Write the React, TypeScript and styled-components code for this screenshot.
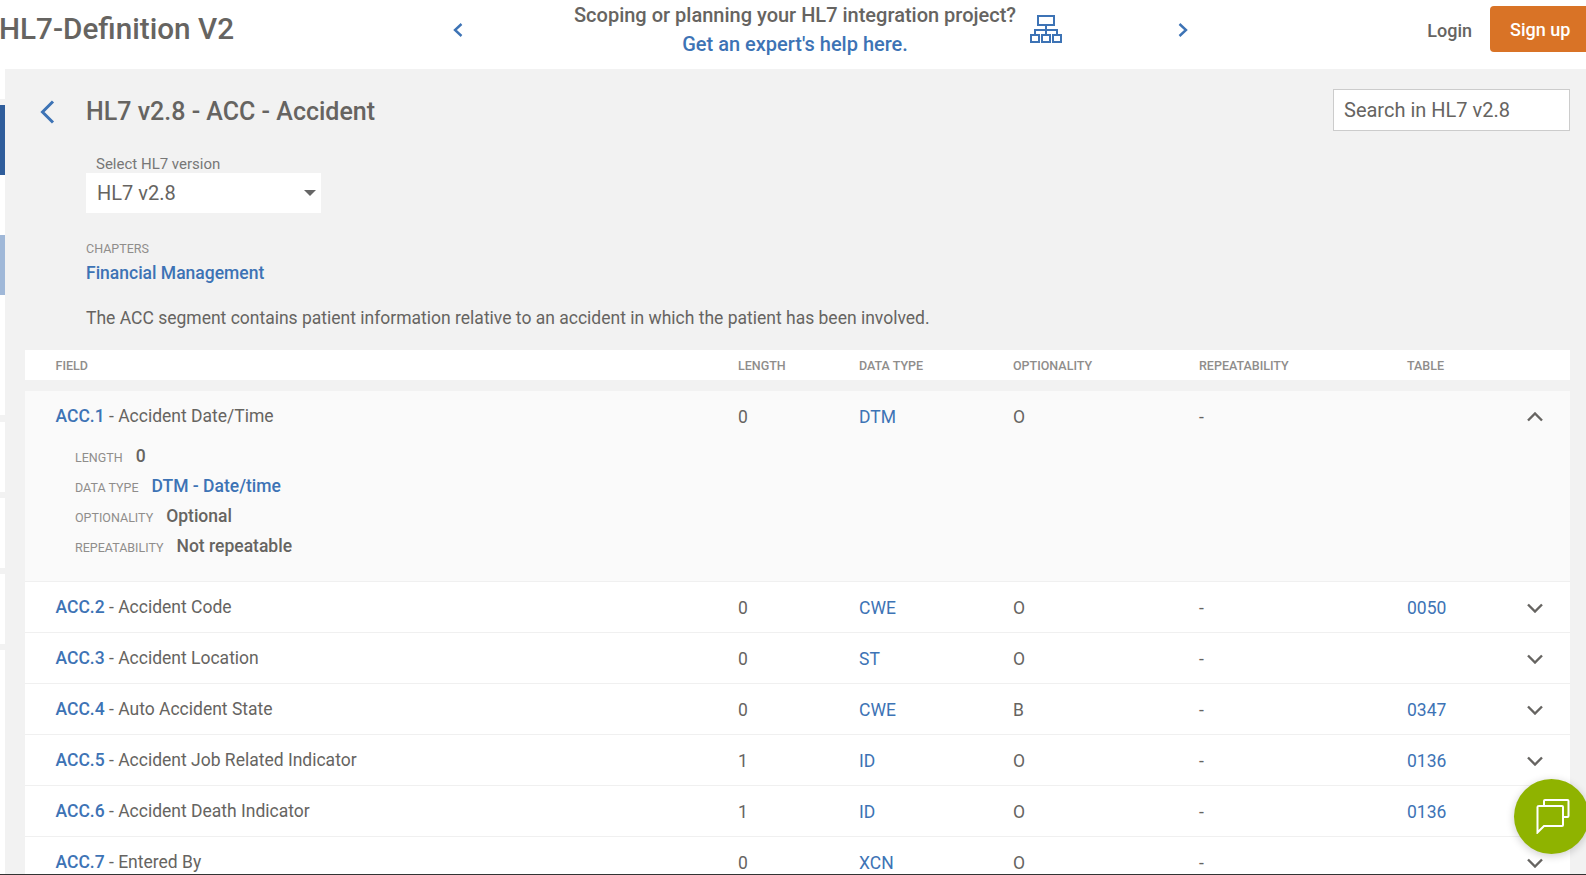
import React from 'react';
import styled, { createGlobalStyle } from 'styled-components';

const BLUE = '#3d73b5';
const TEXT = '#666461';
const LABEL = '#8f8d8b';

const GlobalStyle = createGlobalStyle`
  html, body {
    margin: 0;
    padding: 0;
    background: #fff;
  }
  body {
    font-family: Roboto, "Liberation Sans", Arial, sans-serif;
    color: ${TEXT};
    overflow: hidden;
  }
  * {
    box-sizing: border-box;
  }
`;

const Page = styled.div`
  height: 875px;
  overflow: hidden;
  display: flex;
  flex-direction: column;
  border-bottom: 1px solid #333;
`;

const Header = styled.header`
  height: 69px;
  flex: none;
  display: flex;
  align-items: flex-start;
  background: #fff;
`;

const SiteTitle = styled.div`
  width: 454px;
  margin-left: -1px;
  padding-top: 9px;
  font-size: 29.7px;
  line-height: 40px;
  font-weight: 500;
  white-space: nowrap;
`;

const Promo = styled.div`
  display: flex;
  align-items: flex-start;
  height: 58px;
`;

const PromoArrow = styled.svg`
  width: 10px;
  height: 14px;
  margin-top: 23px;
  flex: none;
  fill: none;
  stroke: ${BLUE};
  stroke-width: 2.4;
`;

const PromoText = styled.div`
  margin: 0 14px 0 111px;
  padding-top: 1px;
  text-align: center;
  font-size: 20px;
  line-height: 29px;
  font-weight: 500;
  white-space: nowrap;
`;

const PromoLink = styled.a`
  display: block;
  color: ${BLUE};
`;

const OrgIcon = styled.svg`
  width: 32px;
  height: 28px;
  margin: 15px 116px 0 0;
  flex: none;
  fill: none;
  stroke: ${BLUE};
  stroke-width: 2;
`;

const LoginLink = styled.a`
  margin-left: auto;
  margin-top: 20px;
  font-size: 18px;
  line-height: 22px;
  font-weight: 500;
`;

const SignUpButton = styled.a`
  width: 96px;
  height: 46px;
  margin: 6px 0 0 18px;
  flex: none;
  display: flex;
  align-items: center;
  padding-left: 20px;
  background: #d97326;
  border-radius: 4px 0 0 4px;
  color: #fff;
  font-size: 18px;
  font-weight: 500;
`;

const Body = styled.div`
  flex: 1;
  min-height: 0;
  display: flex;
`;

const Rail = styled.aside`
  width: 5px;
  flex: none;
  display: flex;
  flex-direction: column;
  background: #fff;
`;

const RailBlock = styled.div<{ $h: number; $color: string }>`
  height: ${(p) => p.$h}px;
  flex: none;
  background: ${(p) => p.$color};
`;

const Main = styled.main`
  flex: 1;
  min-width: 0;
  padding: 20px 16px 0 20px;
  background: #f2f2f2;
`;

const TitleRow = styled.div`
  display: flex;
  align-items: flex-start;
  height: 41px;
`;

const BackArrow = styled.svg`
  width: 15px;
  height: 24px;
  margin: 11px 31px 0 15px;
  flex: none;
  fill: none;
  stroke: ${BLUE};
  stroke-width: 3;
`;

const Heading = styled.h1`
  margin: 0;
  padding-top: 8px;
  font-size: 25px;
  line-height: 30px;
  font-weight: 500;
`;

const SearchBox = styled.input`
  width: 237px;
  height: 42px;
  margin-left: auto;
  padding: 0 10px;
  border: 1px solid #ccc;
  background: #fff;
  font-family: inherit;
  font-size: 20px;
  color: ${TEXT};

  &::placeholder {
    color: ${TEXT};
    opacity: 1;
  }
`;

const Intro = styled.section`
  padding-left: 61px;
`;

const SelectLabel = styled.label`
  display: block;
  margin-top: 25px;
  padding-left: 10px;
  font-size: 15px;
  line-height: 18px;
  color: #777;
`;

const SelectBox = styled.div`
  width: 235px;
  height: 40px;
  display: flex;
  align-items: center;
  justify-content: space-between;
  padding: 0 5px 0 11px;
  background: #fff;
  font-size: 20px;
`;

const Caret = styled.span`
  width: 0;
  height: 0;
  border-left: 6px solid transparent;
  border-right: 6px solid transparent;
  border-top: 6px solid #666;
`;

const ChaptersLabel = styled.div`
  margin-top: 28px;
  font-size: 12.5px;
  line-height: 16px;
  color: ${LABEL};
`;

const ChapterLink = styled.a`
  display: block;
  margin-top: 4px;
  font-size: 17.5px;
  line-height: 24px;
  font-weight: 500;
  color: ${BLUE};
`;

const Description = styled.p`
  margin: 21px 0 0;
  font-size: 17.5px;
  line-height: 24px;
`;

const columns = '682.5px 121px 154px 186px 208px 1fr 43px';

const TableHead = styled.div`
  display: grid;
  grid-template-columns: ${columns};
  align-items: center;
  height: 30px;
  margin-top: 20px;
  padding: 1px 0 0 30.5px;
  background: #fff;
  font-size: 12.5px;
  font-weight: 500;
  color: ${LABEL};
`;

const Rows = styled.div`
  margin-top: 11px;
  background: #fff;
`;

const Row = styled.div<{ $open?: boolean }>`
  padding: 0 0 0 30.5px;
  background: ${(p) => (p.$open ? '#fafafa' : '#fff')};
  border-bottom: 1px solid #f0f0f0;
  height: ${(p) => (p.$open ? '191px' : '51px')};
`;

const RowLine = styled.div`
  display: grid;
  grid-template-columns: ${columns};
  align-items: center;
  height: 52px;
  font-size: 17.5px;
`;

const FieldName = styled.div`
  padding-bottom: 2px;
  white-space: nowrap;
`;

const FieldId = styled.a`
  font-weight: 500;
  color: ${BLUE};
`;

const CellLink = styled.a`
  color: ${BLUE};
`;

const Chevron = styled.svg`
  width: 16px;
  height: 10px;
  justify-self: start;
  fill: none;
  stroke: ${TEXT};
  stroke-width: 2.4;
`;

const Details = styled.div`
  display: flex;
  flex-direction: column;
  gap: 6px;
  padding: 3px 0 0 19.5px;
`;

const DetailRow = styled.div`
  display: flex;
  align-items: baseline;
  gap: 13px;
  height: 24px;
`;

const DetailLabel = styled.span`
  font-size: 12.5px;
  color: ${LABEL};
`;

const DetailValue = styled.span`
  font-size: 17.5px;
  font-weight: 500;
`;

const DetailLink = styled(DetailValue)`
  color: ${BLUE};
`;

const ChatButton = styled.button`
  position: fixed;
  left: 1514px;
  top: 779px;
  width: 75px;
  height: 75px;
  padding: 0;
  border: none;
  border-radius: 50%;
  background: #8fb300;
  box-shadow: 0 2px 8px rgba(0, 0, 0, 0.2);
`;

const ChatIcon = styled.svg`
  display: block;
  position: absolute;
  left: 22px;
  top: 19px;
  width: 34px;
  height: 36px;
  fill: none;
  stroke: #fff;
  stroke-width: 2;
`;

const railBlocks = [
  { h: 30, color: '#fff' },
  { h: 6, color: '#f2f2f2' },
  { h: 70, color: '#2f5d9b' },
  { h: 60, color: '#fff' },
  { h: 60, color: '#a0b8d8' },
  { h: 120, color: '#fff' },
  { h: 7, color: '#f2f2f2' },
  { h: 70, color: '#fff' },
  { h: 6, color: '#f2f2f2' },
  { h: 70, color: '#fff' },
  { h: 6, color: '#f2f2f2' },
  { h: 70, color: '#fff' },
  { h: 6, color: '#f2f2f2' },
];

const fields = [
  { id: 'ACC.2', name: 'Accident Code', length: '0', type: 'CWE', opt: 'O', table: '0050' },
  { id: 'ACC.3', name: 'Accident Location', length: '0', type: 'ST', opt: 'O', table: '' },
  { id: 'ACC.4', name: 'Auto Accident State', length: '0', type: 'CWE', opt: 'B', table: '0347' },
  { id: 'ACC.5', name: 'Accident Job Related Indicator', length: '1', type: 'ID', opt: 'O', table: '0136' },
  { id: 'ACC.6', name: 'Accident Death Indicator', length: '1', type: 'ID', opt: 'O', table: '0136' },
  { id: 'ACC.7', name: 'Entered By', length: '0', type: 'XCN', opt: 'O', table: '' },
];

const ChevronDown = () => (
  <Chevron viewBox="0 0 16 10">
    <path d="M1 1.5 L8 8.5 L15 1.5" />
  </Chevron>
);

const ChevronUp = () => (
  <Chevron viewBox="0 0 16 10">
    <path d="M1 8.5 L8 1.5 L15 8.5" />
  </Chevron>
);

const App: React.FC = () => {
  return (
    <Page>
      <GlobalStyle />
      <Header>
        <SiteTitle>HL7-Definition V2</SiteTitle>
        <Promo>
          <PromoArrow viewBox="0 0 10 14">
            <path d="M8.5 1 L2 7 L8.5 13" />
          </PromoArrow>
          <PromoText>
            Scoping or planning your HL7 integration project?
            <PromoLink>Get an expert's help here.</PromoLink>
          </PromoText>
          <OrgIcon viewBox="0 0 32 28">
            <rect x="8" y="1" width="16" height="9" />
            <path d="M16 10 V20 M5 20 V15 H27 V20" />
            <rect x="1" y="20" width="8" height="7" />
            <rect x="12" y="20" width="8" height="7" />
            <rect x="23" y="20" width="8" height="7" />
          </OrgIcon>
          <PromoArrow viewBox="0 0 10 14">
            <path d="M1.5 1 L8 7 L1.5 13" />
          </PromoArrow>
        </Promo>
        <LoginLink>Login</LoginLink>
        <SignUpButton>Sign up</SignUpButton>
      </Header>
      <Body>
        <Rail>
          {railBlocks.map((block, index) => (
            <RailBlock key={index} $h={block.h} $color={block.color} />
          ))}
        </Rail>
        <Main>
          <TitleRow>
            <BackArrow viewBox="0 0 15 24">
              <path d="M13 1.5 L2.5 12 L13 22.5" />
            </BackArrow>
            <Heading>HL7 v2.8 - ACC - Accident</Heading>
            <SearchBox placeholder="Search in HL7 v2.8" />
          </TitleRow>
          <Intro>
            <SelectLabel>Select HL7 version</SelectLabel>
            <SelectBox>
              HL7 v2.8
              <Caret />
            </SelectBox>
            <ChaptersLabel>CHAPTERS</ChaptersLabel>
            <ChapterLink>Financial Management</ChapterLink>
            <Description>
              The ACC segment contains patient information relative to an accident in which the patient has been involved.
            </Description>
          </Intro>
          <TableHead>
            <div>FIELD</div>
            <div>LENGTH</div>
            <div>DATA TYPE</div>
            <div>OPTIONALITY</div>
            <div>REPEATABILITY</div>
            <div>TABLE</div>
          </TableHead>
          <Rows>
            <Row $open>
              <RowLine>
                <FieldName>
                  <FieldId>ACC.1</FieldId> - Accident Date/Time
                </FieldName>
                <div>0</div>
                <CellLink>DTM</CellLink>
                <div>O</div>
                <div>-</div>
                <div />
                <ChevronUp />
              </RowLine>
              <Details>
                <DetailRow>
                  <DetailLabel>LENGTH</DetailLabel>
                  <DetailValue>0</DetailValue>
                </DetailRow>
                <DetailRow>
                  <DetailLabel>DATA TYPE</DetailLabel>
                  <DetailLink>DTM - Date/time</DetailLink>
                </DetailRow>
                <DetailRow>
                  <DetailLabel>OPTIONALITY</DetailLabel>
                  <DetailValue>Optional</DetailValue>
                </DetailRow>
                <DetailRow>
                  <DetailLabel>REPEATABILITY</DetailLabel>
                  <DetailValue>Not repeatable</DetailValue>
                </DetailRow>
              </Details>
            </Row>
            {fields.map((field) => (
              <Row key={field.id}>
                <RowLine>
                  <FieldName>
                    <FieldId>{field.id}</FieldId> - {field.name}
                  </FieldName>
                  <div>{field.length}</div>
                  <CellLink>{field.type}</CellLink>
                  <div>{field.opt}</div>
                  <div>-</div>
                  <CellLink>{field.table}</CellLink>
                  <ChevronDown />
                </RowLine>
              </Row>
            ))}
          </Rows>
        </Main>
      </Body>
      <ChatButton aria-label="Chat">
        <ChatIcon viewBox="0 0 34 36">
          <path d="M8 7 V3 Q8 2 9 2 H31.5 Q32.5 2 32.5 3 V18 Q32.5 19 31.5 19 H28" />
          <path d="M3 8 H26 Q27 8 27 9 V27 Q27 28 26 28 H8 L1.5 34.5 V9 Q1.5 8 3 8 Z" />
        </ChatIcon>
      </ChatButton>
    </Page>
  );
};

export default App;
